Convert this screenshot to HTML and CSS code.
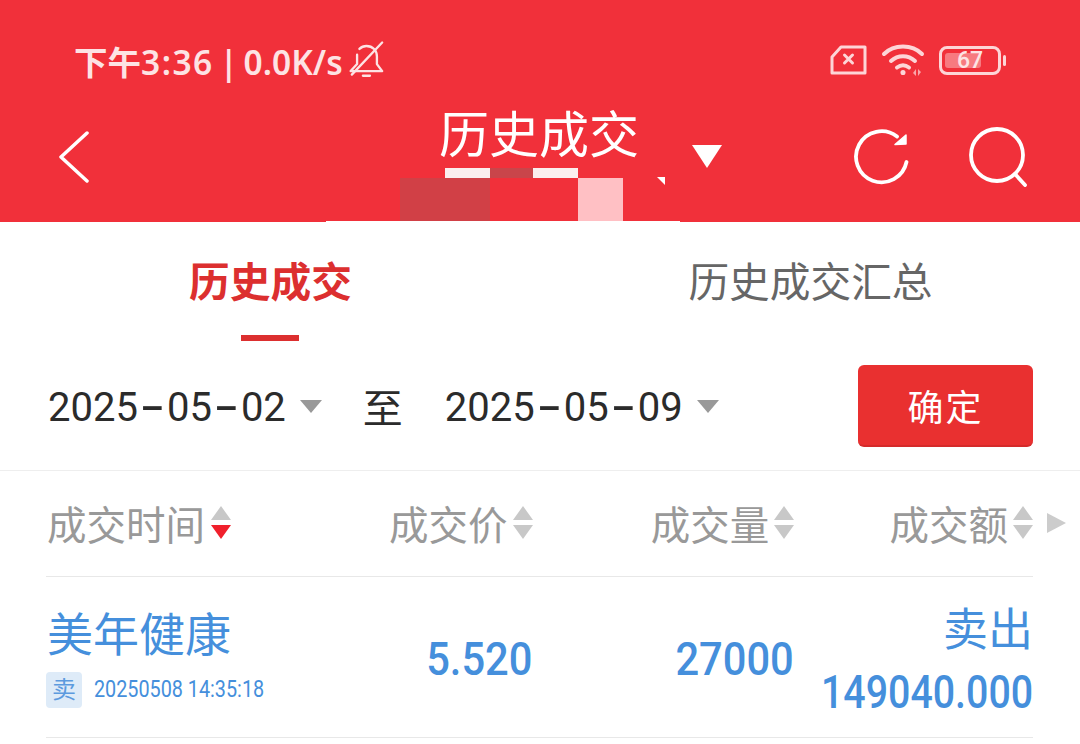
FILE: index.html
```html
<!DOCTYPE html>
<html lang="zh-CN">
<head>
    <meta charset="UTF-8">
    <meta name="viewport" content="width=device-width, initial-scale=1.0">
    <title>历史成交</title>
    <link rel="stylesheet" href="styles.css">
</head>
<body>
    <div class="top">
        <div class="status">
            <div class="status-left">
                <span class="clock">下午<span class="time">3:36</span> | 0.0K/s</span>
                <svg class="bell" width="42" height="42" viewBox="0 0 36 36" fill="none" stroke="#fde3e4" stroke-width="2" stroke-linejoin="round" stroke-linecap="round">
                    <path d="M4 27.5h27l-4.5-6V15c0-5-3.500-9-9-9-2.500 0-4.500 1-6 2.500M9.500 13.500v8L4 27.500"/>
                    <path d="M14.500 31.500h6"/>
                    <path d="M5 30.500 31 3"/>
                </svg>
            </div>
            <div class="status-right">
                <svg width="37" height="30" viewBox="0 0 37 30" fill="none" stroke="#fdd5d7" stroke-width="3" stroke-linejoin="round" stroke-linecap="round">
                    <path d="M2 12 11 2h24v26H2z"/>
                    <path d="M14.500 10l8 8M22.500 10l-8 8"/>
                </svg>
                <svg width="44" height="34" viewBox="0 0 44 34" fill="none" stroke="#fdd5d7" stroke-width="4" stroke-linecap="round">
                    <path d="M3 11C13 1 31 1 41 11"/>
                    <path d="M10 18c7-6.500 17-6.500 24 0"/>
                    <path d="M16 24.500c4-3 8-3 12 0"/>
                    <circle cx="22" cy="29.500" r="1.800" fill="#fdd5d7" stroke-width="1.500"/>
                    <path d="M35 26v7l-3-3zM37 26v7l3-4z" fill="#f9a5a9" stroke="none"/>
                </svg>
                <div class="battery">
                    <div class="battery-body">
                        <span class="battery-fill"></span>
                        <span class="battery-num">67</span>
                    </div>
                    <span class="battery-cap"></span>
                </div>
            </div>
        </div>
        <div class="titlebar">
            <svg class="back" width="32" height="52" viewBox="0 0 32 52" fill="none" stroke="#fff" stroke-width="3.500" stroke-linecap="round" stroke-linejoin="round">
                <path d="M29 2 3 26l26 24"/>
            </svg>
            <div class="title">历史成交</div>
            <span class="title-arrow"></span>
            <svg class="refresh" width="58" height="58" viewBox="0 0 58 58" fill="none" stroke="#fff" stroke-width="3.800" stroke-linecap="round">
                <path d="M53.500 34A25.500 25.500 0 1 1 44 8.500"/>
                <path d="M42 16.500 53 16 53 7z" fill="#fff" stroke-width="1.500" stroke-linejoin="round"/>
            </svg>
            <svg class="search" width="60" height="60" viewBox="0 0 60 60" fill="none" stroke="#fff" stroke-width="3.800" stroke-linecap="round">
                <circle cx="29" cy="28" r="26"/>
                <path d="M47 47l10 11"/>
            </svg>
        </div>
        <!-- 打码的色块 -->
        <span class="mask mask-a"></span>
        <span class="mask mask-b"></span>
        <span class="mask mask-c"></span>
        <span class="mask mask-d"></span>
        <span class="mask mask-e"></span>
        <span class="mask mask-f"></span>
        <span class="mask mask-g"></span>
    </div>

    <div class="tabs">
        <div class="tab active">历史成交</div>
        <div class="tab">历史成交汇总</div>
    </div>

    <div class="dates">
        <span class="date">2025<span class="dash">-</span>05<span class="dash">-</span>02</span>
        <span class="caret"></span>
        <span class="to">至</span>
        <span class="date">2025<span class="dash">-</span>05<span class="dash">-</span>09</span>
        <span class="caret"></span>
        <button class="ok">确定</button>
    </div>

    <div class="table">
        <div class="head">
            <div class="col col-time">成交时间<span class="sort on"></span></div>
            <div class="col col-price">成交价<span class="sort"></span></div>
            <div class="col col-vol">成交量<span class="sort"></span></div>
            <div class="col col-amt">成交额<span class="sort"></span></div>
            <span class="more"></span>
        </div>
        <div class="row">
            <div class="col col-time">
                <div class="name">美年健康</div>
                <div class="meta"><span class="tag">卖</span><span class="stamp">20250508 14:35:18</span></div>
            </div>
            <div class="col col-price"><span class="num">5.520</span></div>
            <div class="col col-vol"><span class="num">27000</span></div>
            <div class="col col-amt amt">
                <div class="side">卖出</div>
                <div class="num amt-num">149040.000</div>
            </div>
        </div>
    </div>
</body>
</html>
```

FILE: styles.css
```css
* {
    box-sizing: border-box;
}
html, body {
    height: 100%;
}
body {
    margin: 0;
    overflow: hidden;
    background-color: #fff;
    font-family: Roboto, "Noto Sans CJK SC", sans-serif;
}
.top {
    position: relative;
    height: 222px;
    background-color: #f1303a;
    padding: 40px 74px 0 58px;
}
.status {
    display: flex;
    justify-content: space-between;
    align-items: center;
    height: 40px;
    padding-left: 16px;
}
.status-left {
    display: flex;
    align-items: center;
    gap: 3px;
    color: #fde3e4;
    font-family: "Noto Sans", "Noto Sans CJK SC", sans-serif;
    font-size: 33.500px;
    font-weight: 600;
}
.clock {
    white-space: nowrap;
    word-spacing: -3px;
}
.time {
    letter-spacing: 1.500px;
}
.status-right {
    display: flex;
    align-items: center;
    gap: 14px;
}
.battery {
    display: flex;
    align-items: center;
    gap: 2px;
}
.battery-body {
    position: relative;
    width: 62px;
    height: 29px;
    border: 3px solid #fdd5d7;
    border-radius: 8px;
    color: #fde3e4;
    font-size: 23px;
    font-weight: 500;
    text-align: center;
    line-height: 23px;
}
.battery-fill {
    position: absolute;
    left: 3px;
    top: 4px;
    bottom: 4px;
    width: 36px;
    border-radius: 3px;
    background-color: #f77a80;
}
.battery-num {
    position: relative;
}
.battery-cap {
    width: 3px;
    height: 11px;
    border-radius: 2px;
    background-color: #fdd5d7;
}
.titlebar {
    display: flex;
    align-items: center;
    margin-top: 19px;
    height: 90px;
    color: #fff;
}
.back {
    margin-top: 26px;
    flex: none;
}
.title {
    margin-left: 349px;
    font-size: 50px;
    line-height: 64px;
    margin-top: -16px;
    white-space: nowrap;
}
.title-arrow {
    width: 0;
    height: 0;
    margin-left: 53px;
    margin-top: 24px;
    border-left: 15px solid transparent;
    border-right: 15px solid transparent;
    border-top: 23px solid #fff;
}
.refresh {
    margin-left: 131px;
    margin-top: 26px;
    flex: none;
}
.search {
    margin-left: 57px;
    margin-top: 26px;
    flex: none;
}
.mask {
    position: absolute;
}
.mask-a {
    left: 445px;
    top: 168px;
    width: 45px;
    height: 10px;
    background-color: #fbeeee;
}
.mask-b {
    left: 490px;
    top: 168px;
    width: 43px;
    height: 10px;
    background-color: #c9454a;
}
.mask-c {
    left: 533px;
    top: 168px;
    width: 45px;
    height: 10px;
    background-color: #fbeeee;
}
.mask-d {
    left: 400px;
    top: 178px;
    width: 90px;
    height: 44px;
    background-color: #d14046;
}
.mask-e {
    left: 578px;
    top: 178px;
    width: 45px;
    height: 44px;
    background-color: #ffc0c4;
}
.mask-f {
    left: 326px;
    top: 221px;
    width: 354px;
    height: 1px;
    background-color: #fff;
}
.mask-g {
    left: 657px;
    top: 177px;
    width: 8px;
    height: 8px;
    background-color: #fff;
    clip-path: polygon(0 0, 100% 0, 100% 100%);
}
.tabs {
    display: flex;
    height: 120px;
}
.tab {
    flex: 1;
    text-align: center;
    font-size: 40.700px;
    line-height: 122px;
    color: #666;
    position: relative;
}
.tabs .tab:first-child {
    flex: 0 0 541px;
}
.tab.active {
    color: #dc2f2f;
    font-weight: 700;
}
.tab.active::after {
    content: "";
    position: absolute;
    left: 241px;
    top: 113px;
    width: 58px;
    height: 6px;
    background-color: #dc2f2f;
}
.dates {
    display: flex;
    align-items: center;
    height: 129px;
    padding: 0 47px 0 48px;
    border-bottom: 1px solid #eee;
    color: #2b2b2b;
    font-size: 40px;
}
.date {
    white-space: nowrap;
    padding-top: 2px;
}
.dash {
    display: inline-block;
    width: 29px;
    text-align: center;
    font-weight: 500;
    transform: scaleX(1.800);
}
.caret {
    width: 0;
    height: 0;
    margin-left: 14px;
    border-left: 11px solid transparent;
    border-right: 11px solid transparent;
    border-top: 13px solid #999;
}
.to {
    margin: 0 42px 0 41px;
}
.ok {
    margin-left: auto;
    width: 175px;
    height: 82px;
    border: none;
    border-bottom: 2px solid #d42a2a;
    border-radius: 6px;
    background-color: #e93030;
    color: #fff;
    font-family: inherit;
    font-size: 36px;
    letter-spacing: 2px;
}
.table {
    padding: 0 47px 0 46px;
}
.head, .row {
    display: flex;
    align-items: center;
    border-bottom: 1px solid #e8e8e8;
    position: relative;
}
.head {
    height: 106px;
    padding-bottom: 3px;
    color: #999;
    font-size: 39.500px;
}
.row {
    height: 161px;
    color: #458fdc;
}
.col {
    display: flex;
    align-items: center;
    justify-content: flex-end;
    white-space: nowrap;
}
.col-time {
    width: 191px;
    justify-content: flex-start;
}
.head .col-time {
    padding-left: 1px;
}
.col-price {
    width: 296px;
}
.col-vol {
    width: 262px;
}
.col-amt {
    width: 239px;
}
.row .col-time {
    flex-direction: column;
    align-items: flex-start;
}
.sort {
    display: flex;
    flex-direction: column;
    gap: 5px;
    margin-left: 5px;
}
.sort.on {
    margin-left: 6px;
}
.sort::before {
    content: "";
    border-left: 10px solid transparent;
    border-right: 10px solid transparent;
    border-bottom: 14px solid #c8c8c8;
}
.sort::after {
    content: "";
    border-left: 10px solid transparent;
    border-right: 10px solid transparent;
    border-top: 14px solid #c8c8c8;
}
.sort.on::after {
    border-top-color: #f0202c;
}
.more {
    position: absolute;
    right: -33px;
    top: 42px;
    border-top: 10px solid transparent;
    border-bottom: 10px solid transparent;
    border-left: 19px solid #ccc;
}
.name {
    font-size: 46px;
    line-height: 60px;
    margin-top: -2px;
    padding-left: 1px;
}
.meta {
    display: flex;
    align-items: center;
    margin-top: 7px;
}
.tag {
    width: 36px;
    height: 36px;
    border-radius: 4px;
    background-color: #deebf8;
    color: #5c9ade;
    font-size: 24px;
    line-height: 36px;
    text-align: center;
}
.stamp {
    display: inline-block;
    margin-left: 12px;
    font-size: 23px;
    transform: scaleX(0.860);
    transform-origin: left center;
}
/* 数字字体偏窄，用 Roboto 压一下宽度 */
.num {
    display: inline-block;
    font-size: 46px;
    font-weight: 500;
    padding-top: 4px;
    transform: scaleX(0.905);
    transform-origin: right center;
}
.amt {
    flex-direction: column;
    align-items: flex-end;
}
.side {
    font-size: 45px;
    line-height: 60px;
    padding-top: 2px;
}
.amt-num {
    line-height: 46px;
    padding-top: 8px;
    transform: scaleX(0.855);
}
```
